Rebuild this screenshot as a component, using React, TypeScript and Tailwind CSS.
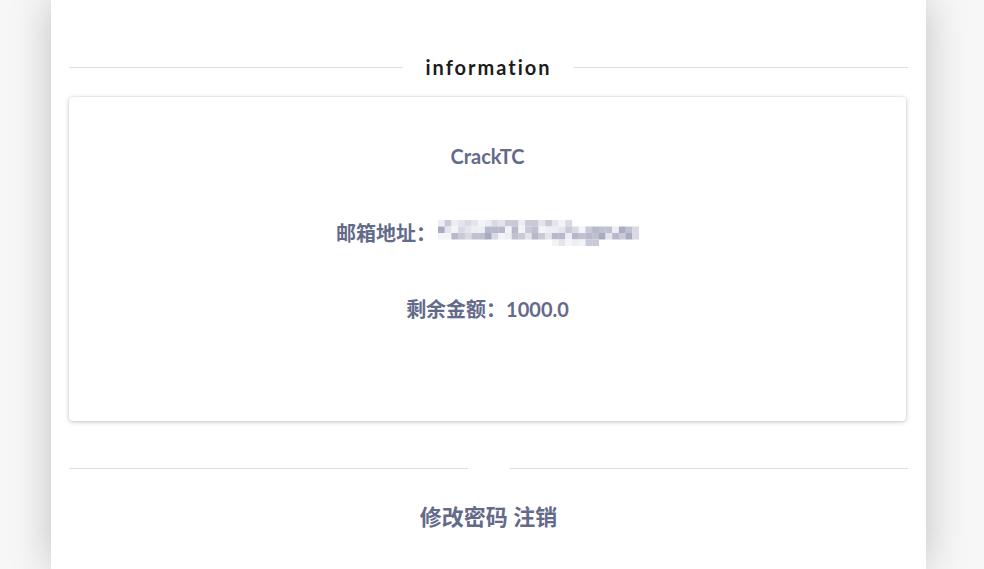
import React from "react";

const palette = ["#eceef4", "#d9dae4", "#c8cad8", "#b7b9cb", "#a9abc0", "#e3e4ec", "#bfc1d1", "#f3f4f8"];

function seeded(n: number) {
  const x = Math.sin(n * 12.9898) * 43758.5453;
  return x - Math.floor(x);
}

function BlurredEmail() {
  const cols = 30;
  const cw = 6.7;
  const ch = 6.5;
  const cells: React.ReactElement[] = [];
  for (let r = 0; r < 4; r++) {
    for (let c = 0; c < cols; c++) {
      if (r === 0 && c > 19) continue;
      if (r === 3 && (c < 17 || c > 23)) continue;
      let idx = Math.floor(seeded(r * 100 + c + 7) * palette.length);
      if (r === 0 || r === 3) idx = [0, 1, 5, 7, 2][Math.floor(seeded(r * 50 + c) * 5)];
      cells.push(
        <rect key={`${r}-${c}`} x={c * cw} y={r * ch} width={cw + 0.2} height={ch} fill={palette[idx]} />
      );
    }
  }
  return (
    <svg width={201} height={26} viewBox="0 0 201 26" className="inline-block align-middle ml-[2px]">
      {cells}
    </svg>
  );
}

export default function App() {
  const cjk = { fontFamily: "Lato, 'Noto Sans CJK SC', sans-serif" };
  return (
    <div className="min-h-[569px] w-full bg-[#f7f7f7] overflow-hidden" style={cjk}>
      <div className="ml-[51px] w-[875px] min-h-[569px] bg-white shadow-[0_0_40px_rgba(0,0,0,0.22)] px-[18px] pt-[53px] pb-[30px]">
        <div className="flex items-center">
          <div className="flex-1 h-px bg-[#dedede]" />
          <div className="px-[22px] text-[20px] leading-[28px] font-bold tracking-[0.1em] text-[#1b1c1d] font-['Lato',sans-serif]">
            information
          </div>
          <div className="flex-1 h-px bg-[#dedede]" />
        </div>
        <div className="mt-[16px] h-[324px] w-[837px] rounded-[4px] bg-white shadow-[0_1px_5px_rgba(0,0,0,0.22),0_0_0_1px_rgba(0,0,0,0.03)] flex flex-col items-center pt-[45px] text-[#646a8a] font-bold">
          <div className="text-[20px] leading-[28px]">CrackTC</div>
          <div className="mt-[49px] text-[20px] leading-[28px] flex items-center">
            <span>邮箱地址：</span>
            <BlurredEmail />
          </div>
          <div className="mt-[48px] text-[20px] leading-[28px]">剩余金额：1000.0</div>
        </div>
        <div className="mt-[47px] flex items-center">
          <div className="flex-1 h-px bg-[#dedede]" />
          <div className="w-[42px]" />
          <div className="flex-1 h-px bg-[#dedede]" />
        </div>
        <div className="mt-[33px] text-center text-[22px] leading-[30px] font-bold text-[#646a8a]">
          修改密码 注销
        </div>
      </div>
    </div>
  );
}
